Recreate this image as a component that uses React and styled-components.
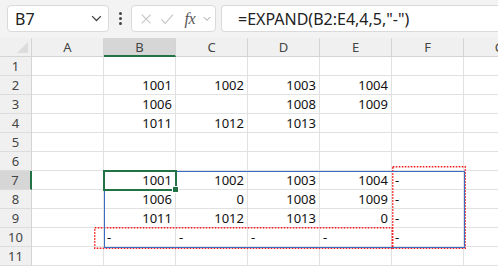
import React from 'react';
import styled, { createGlobalStyle, css } from 'styled-components';

const GlobalStyle = createGlobalStyle`
  html, body {
    margin: 0;
    padding: 0;
    background: #ffffff;
    overflow: hidden;
  }
  body {
    font-family: "Noto Sans", "Liberation Sans", sans-serif;
  }
`;

const Page = styled.div`
  width: 498px;
  height: 266px;
  overflow: hidden;
  background: #ffffff;
`;

const Toolbar = styled.div`
  height: 38px;
  box-sizing: border-box;
  background: #f3f3f3;
  display: flex;
  align-items: flex-start;
  padding: 5px 0 0 7px;
`;

const Box = styled.div`
  height: 27px;
  box-sizing: border-box;
  background: #ffffff;
  border: 1px solid #dadada;
  border-radius: 4px;
  display: flex;
  align-items: center;
`;

const NameBox = styled(Box)`
  width: 102px;
  padding: 0 6px 0 7px;
  justify-content: space-between;
  font-size: 16px;
  color: #222;
`;

const Dots = styled.div`
  width: 22px;
  height: 27px;
  display: flex;
  flex-direction: column;
  align-items: center;
  justify-content: center;
  gap: 2px;
  > span {
    width: 3px;
    height: 3px;
    border-radius: 50%;
    background: #444;
  }
`;

const FuncBox = styled(Box)`
  width: 85px;
  padding: 0 4px 0 8px;
  gap: 8px;
`;

const Fx = styled.span`
  font-family: "Liberation Serif", "DejaVu Serif", serif;
  font-style: italic;
  font-size: 16px;
  color: #555;
  margin-left: 2px;
  letter-spacing: -0.5px;
`;

const FormulaBar = styled(Box)`
  flex: 1;
  margin-left: 5px;
  border-right: none;
  border-radius: 4px 0 0 4px;
  padding-left: 16px;
  font-size: 16px;
  color: #222;
  white-space: nowrap;
`;

const Sheet = styled.div`
  position: relative;
  display: grid;
  grid-template-columns: 32px repeat(7, 72px);
  grid-auto-rows: 19px;
  font-size: 13px;
`;

const Corner = styled.div`
  background: #f0f0f0;
  border-right: 1px solid #d4d4d4;
  border-bottom: 1px solid #d4d4d4;
  box-sizing: border-box;
  position: relative;
  &::after {
    content: '';
    position: absolute;
    right: 3px;
    bottom: 3px;
    border-style: solid;
    border-width: 0 0 11px 11px;
    border-color: transparent transparent #dcdcdc transparent;
  }
`;

const ColHead = styled.div`
  background: ${p => (p.$active ? '#d6d6d6' : '#f0f0f0')};
  border-right: 1px solid #d4d4d4;
  border-bottom: ${p => (p.$active ? '2px solid #217346' : '1px solid #d4d4d4')};
  box-sizing: border-box;
  display: flex;
  align-items: center;
  justify-content: center;
  color: #444;
  font-size: 13px;
  white-space: nowrap;
`;

const RowHead = styled.div`
  background: ${p => (p.$active ? '#d6d6d6' : '#f0f0f0')};
  border-right: ${p => (p.$active ? '2px solid #217346' : '1px solid #d4d4d4')};
  border-bottom: 1px solid #dcdcdc;
  box-sizing: border-box;
  display: flex;
  align-items: center;
  justify-content: center;
  color: #444;
  font-size: 13px;
`;

const Cell = styled.div`
  border-right: 1px solid #e1e1e1;
  border-bottom: 1px solid #e1e1e1;
  box-sizing: border-box;
  display: flex;
  align-items: center;
  padding: 0 3px;
  color: #111;
  white-space: nowrap;
  justify-content: ${p => (p.$text ? 'flex-start' : 'flex-end')};
`;

const Overlay = styled.div`
  position: absolute;
  box-sizing: border-box;
  pointer-events: none;
  ${p => p.$kind === 'spill' && css`
    border: 1px solid #3b6cc4;
  `}
  ${p => p.$kind === 'active' && css`
    border: 2px solid #217346;
  `}
  > svg {
    display: block;
    overflow: visible;
  }
`;

const Handle = styled.div`
  position: absolute;
  right: -4px;
  bottom: -4px;
  width: 5px;
  height: 5px;
  background: #217346;
  border: 1px solid #fff;
`;

const Chevron = ({ size = 10, color = '#555' }) => (
  <svg width={size} height={size * 0.6} viewBox="0 0 10 6">
    <path d="M1 1l4 4 4-4" fill="none" stroke={color} strokeWidth="1.2" />
  </svg>
);

// red dotted annotation frame drawn over the sheet
const Marker = ({ left, top, width, height }) => (
  <Overlay style={{ left, top, width, height }}>
    <svg width={width} height={height}>
      <rect
        x="0.75"
        y="0.75"
        width={width - 1.5}
        height={height - 1.5}
        fill="none"
        stroke="#f41a1a"
        strokeWidth="1.5"
        strokeDasharray="1.6 1.4"
      />
    </svg>
  </Overlay>
);

const cols = ['A', 'B', 'C', 'D', 'E', 'F', 'G'];

const data = {
  2: { B: 1001, C: 1002, D: 1003, E: 1004 },
  3: { B: 1006, D: 1008, E: 1009 },
  4: { B: 1011, C: 1012, D: 1013 },
  7: { B: 1001, C: 1002, D: 1003, E: 1004, F: '-' },
  8: { B: 1006, C: 0, D: 1008, E: 1009, F: '-' },
  9: { B: 1011, C: 1012, D: 1013, E: 0, F: '-' },
  10: { B: '-', C: '-', D: '-', E: '-', F: '-' },
};

export default function App() {
  const rows = Array.from({ length: 11 }, (_, i) => i + 1);
  return (
    <Page>
      <GlobalStyle />
      <Toolbar>
        <NameBox>
          <span>B7</span>
          <Chevron size={11} color="#444" />
        </NameBox>
        <Dots>
          <span />
          <span />
          <span />
        </Dots>
        <FuncBox>
          <svg width="14" height="14" viewBox="0 0 14 14">
            <path d="M2 2l10 10M12 2L2 12" stroke="#c4c4c4" strokeWidth="1.2" fill="none" />
          </svg>
          <svg width="16" height="14" viewBox="0 0 16 14">
            <path d="M1.5 7.5l4.5 4.5L14.5 2" stroke="#c4c4c4" strokeWidth="1.2" fill="none" />
          </svg>
          <Fx>fx</Fx>
          <Chevron size={9} color="#999" />
        </FuncBox>
        <FormulaBar>=EXPAND(B2:E4,4,5,"-")</FormulaBar>
      </Toolbar>
      <Sheet>
        <Corner />
        {cols.map(c => (
          <ColHead key={c} $active={c === 'B'}>{c}</ColHead>
        ))}
        {rows.map(r => (
          <React.Fragment key={r}>
            <RowHead $active={r === 7}>{r}</RowHead>
            {cols.map(c => {
              const v = data[r] && data[r][c];
              return (
                <Cell key={c} $text={typeof v === 'string'}>
                  {v !== undefined ? v : ''}
                </Cell>
              );
            })}
          </React.Fragment>
        ))}
        <Marker left={392} top={128} width={74} height={83} />
        <Marker left={94} top={189} width={299} height={22} />
        <Overlay $kind="spill" style={{ left: 104, top: 133, width: 361, height: 77 }} />
        <Overlay $kind="active" style={{ left: 103, top: 132, width: 74, height: 21 }}>
          <Handle />
        </Overlay>
      </Sheet>
    </Page>
  );
}
